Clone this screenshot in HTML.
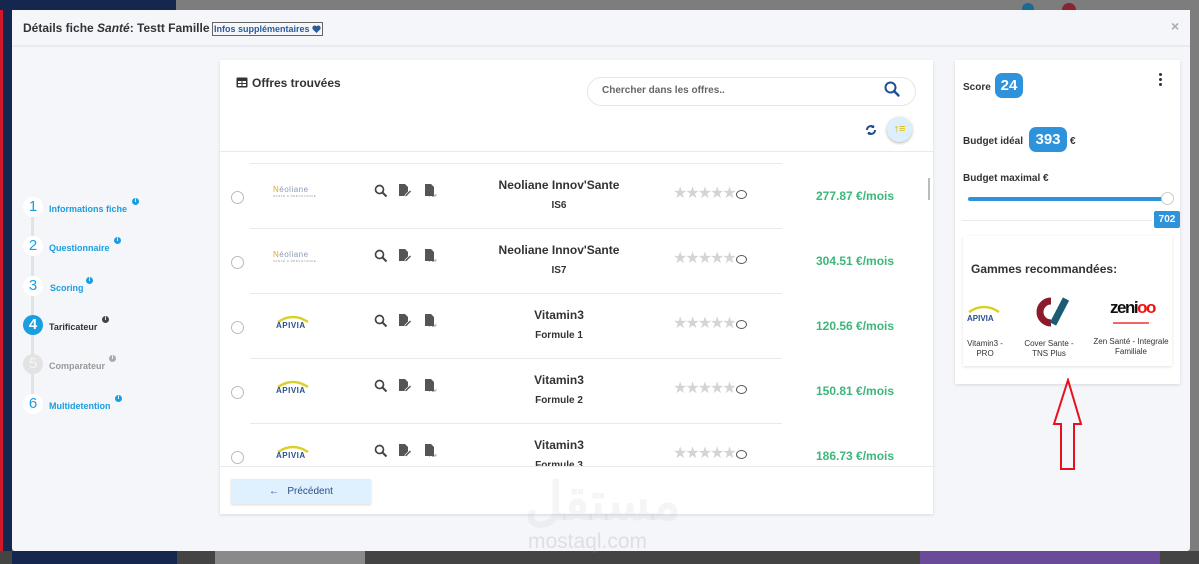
<!DOCTYPE html>
<html><head><meta charset="utf-8"><style>
*{box-sizing:border-box;margin:0;padding:0}
body{width:1199px;height:564px;overflow:hidden;position:relative;background:#7d7d7d;font-family:"Liberation Sans",Arial,sans-serif;color:#333}
.a{position:absolute}
.b{font-weight:bold}
.modal{left:12px;top:10px;width:1178px;height:541px;background:#f5f6fa;border-radius:3px}
.card{background:#fff;box-shadow:0 1px 3px rgba(0,0,0,.12)}
.sep{height:1px;background:#e6e9ee}
.radio{width:13px;height:13px;border:1px solid #bbb;border-radius:50%}
.stars{color:#d4d4d4;font-size:16px;letter-spacing:-2px}
.price{color:#3cb77a;font-weight:bold;font-size:12px}
.step{width:20px;height:20px;border-radius:50%;background:#fff;color:#1a9ee0;font-size:15px;text-align:center;line-height:20px}
.sl{font-size:9px;font-weight:bold;color:#1a9ee0}
.inf{width:7px;height:7px;border-radius:50%;background:#1a9ee0;color:#fff;font-size:6px;line-height:7px;text-align:center;font-weight:bold}
.badge{background:#2f93dc;color:#fff;font-weight:bold;border-radius:7px;text-align:center}
</style></head><body>
<div class="a" style="left:0;top:0;width:12px;height:564px;background:#15274e"></div>
<div class="a" style="left:0;top:0;width:3px;height:564px;background:#d0182a"></div>
<div class="a" style="left:0;top:0;width:176px;height:10px;background:#15274e"></div>
<div class="a" style="left:0;top:551px;width:1199px;height:13px;background:#444"></div>
<div class="a" style="left:12px;top:551px;width:165px;height:13px;background:#15274e"></div>
<div class="a" style="left:215px;top:551px;width:150px;height:13px;background:#8a8a8a"></div>
<div class="a" style="left:920px;top:551px;width:240px;height:13px;background:#6a4b9a"></div>
<div class="a" style="left:1022px;top:3px;width:12px;height:8px;border-radius:6px 6px 0 0;background:#1a6a92"></div>
<div class="a" style="left:1062px;top:3px;width:14px;height:8px;border-radius:7px 7px 0 0;background:#8b2232"></div>

<div class="a modal">
  <div class="a" style="left:0;top:0;width:1178px;height:37px;border-bottom:2px solid #e8ebf0;background:#f4f6fa"></div>
  <div class="a b" style="left:11px;top:11px;font-size:12px;color:#333">Détails fiche <i>Santé</i>: Testt Famille</div>
  <div class="a" style="left:200px;top:12px;width:111px;height:14px;border:1px solid #666;font-size:9px;color:#2b5b9a;font-weight:bold;line-height:12px;padding-left:1px">Infos supplémentaires <svg width="9" height="8" viewBox="0 0 10 9" style="vertical-align:-1px"><path d="M5 9L1 5A2.4 2.4 0 0 1 5 1.5A2.4 2.4 0 0 1 9 5Z" fill="#2b5b9a"/></svg></div>
  <div class="a" style="left:1159px;top:8px;color:#aaa;font-size:14px;font-weight:bold">×</div>
</div>

<!-- stepper -->
<div class="a" style="left:31px;top:208px;width:3px;height:195px;background:#e3e3e3"></div>
<div class="a step" style="left:23px;top:197px">1</div><div class="a sl" style="left:49px;top:204px">Informations fiche</div><div class="a inf" style="left:132px;top:198px">i</div>
<div class="a step" style="left:23px;top:236px">2</div><div class="a sl" style="left:49px;top:243px">Questionnaire</div><div class="a inf" style="left:114px;top:237px">i</div>
<div class="a step" style="left:23px;top:276px">3</div><div class="a sl" style="left:50px;top:283px">Scoring</div><div class="a inf" style="left:86px;top:277px">i</div>
<div class="a step" style="left:23px;top:315px;background:#1a9ee0;color:#fff;font-weight:bold">4</div><div class="a sl" style="left:49px;top:322px;color:#333">Tarificateur</div><div class="a inf" style="left:102px;top:316px;background:#444">i</div>
<div class="a step" style="left:23px;top:354px;background:#e3e3e3;color:#f5f5f5">5</div><div class="a sl" style="left:49px;top:361px;color:#999">Comparateur</div><div class="a inf" style="left:109px;top:355px;background:#aaa">i</div>
<div class="a step" style="left:23px;top:394px">6</div><div class="a sl" style="left:49px;top:401px">Multidetention</div><div class="a inf" style="left:115px;top:395px">i</div>

<!-- main card -->
<div class="a card" style="left:220px;top:60px;width:713px;height:454px"></div>
<svg class="a" style="left:236px;top:77px" width="12" height="11" viewBox="0 0 12 11"><rect x="0.5" y="0.5" width="11" height="10" rx="1" fill="#333"/><path d="M2 4h3.5v2H2zM6.5 4H10v2H6.5zM2 7h3.5v2H2zM6.5 7H10v2H6.5z" fill="#fff"/></svg>
<div class="a b" style="left:252px;top:76px;font-size:12px">Offres trouvées</div>
<div class="a" style="left:587px;top:77px;width:329px;height:29px;border:1px solid #e6e6e6;border-radius:15px"></div>
<div class="a" style="left:602px;top:85px;font-size:10px;color:#666;font-weight:bold">Chercher dans les offres..</div>
<svg class="a" style="left:883px;top:80px" width="18" height="18" viewBox="0 0 18 18"><circle cx="7.5" cy="7.5" r="5" fill="none" stroke="#1f4f93" stroke-width="2"/><path d="M11 11l4.5 4.5" stroke="#1f4f93" stroke-width="2.4" stroke-linecap="round"/></svg>
<svg class="a" style="left:865px;top:124px" width="12" height="12" viewBox="0 0 12 12"><path d="M2 6a4 4 0 0 1 7-2.6M10 6a4 4 0 0 1-7 2.6" stroke="#1f4f93" stroke-width="2" fill="none"/><path d="M9 1v3H6z M3 11V8h3z" fill="#1f4f93"/></svg>
<div class="a" style="left:887px;top:117px;width:25px;height:25px;border-radius:50%;background:#dcefff;box-shadow:0 1px 3px rgba(0,0,0,.3);color:#d9b800;font-size:11px;text-align:center;line-height:25px;font-weight:bold">↑≡</div>
<div class="a sep" style="left:220px;top:151px;width:713px"></div>

<!-- rows -->
<div class="a sep" style="left:250px;top:163px;width:532px"></div>
<div class="a sep" style="left:250px;top:228px;width:532px"></div>
<div class="a sep" style="left:250px;top:293px;width:532px"></div>
<div class="a sep" style="left:250px;top:358px;width:532px"></div>
<div class="a sep" style="left:250px;top:423px;width:532px"></div>
<div class="a" style="left:928px;top:178px;width:2px;height:22px;background:#bbb"></div>

<div id="rows"></div>
<script>
var rows=[["neo","Neoliane Innov'Sante","IS6","277.87"],["neo","Neoliane Innov'Sante","IS7","304.51"],["ap","Vitamin3","Formule 1","120.56"],["ap","Vitamin3","Formule 2","150.81"],["ap","Vitamin3","Formule 3","186.73"]];
var h="";
rows.forEach(function(r,i){var y=163+65*i;
h+='<div class="a radio" style="left:231px;top:'+(y+28)+'px"></div>';
if(r[0]=="neo")h+='<div class="a" style="left:273px;top:'+(y+22)+'px;font-size:8px;color:#8a9bb5;letter-spacing:.5px"><span style="color:#e0a820">N</span>éoliane<div style="font-size:3px;color:#999">SANTÉ &amp; PRÉVOYANCE</div></div>';
else h+='<svg class="a" style="left:275px;top:'+(y+20)+'px" width="36" height="10"><path d="M3 9Q18 -1 33 9" stroke="#d7d12a" stroke-width="2.5" fill="none"/></svg><div class="a b" style="left:276px;top:'+(y+28)+'px;font-size:8px;color:#2a4f8f;letter-spacing:.5px">APIVIA</div>';
h+='<svg class="a" style="left:374px;top:'+(y+21)+'px" width="14" height="14"><circle cx="5.5" cy="5.5" r="4" fill="none" stroke="#444" stroke-width="1.7"/><path d="M8.5 8.5l4 4" stroke="#444" stroke-width="2"/></svg>';
h+='<svg class="a" style="left:398px;top:'+(y+20)+'px" width="14" height="15"><path d="M1 1h6l3 3v9H1z" fill="#555"/><path d="M7 12l5-5 1.5 1.5-5 5H7z" fill="#555" stroke="#fff" stroke-width=".7"/></svg>';
h+='<svg class="a" style="left:424px;top:'+(y+20)+'px" width="14" height="15"><path d="M1 1h6l3 3v9H1z" fill="#555"/><text x="5" y="14" font-size="4" fill="#555" font-family="Liberation Sans">PDF</text></svg>';
h+='<div class="a b" style="left:469px;width:180px;text-align:center;top:'+(y+15)+'px;font-size:12px;color:#333">'+r[1]+'</div>';
h+='<div class="a b" style="left:469px;width:180px;text-align:center;top:'+(y+37)+'px;font-size:10px;color:#333">'+r[2]+'</div>';
h+='<div class="a stars" style="left:673px;top:'+(y+20)+'px">★★★★★</div><div class="a" style="left:736px;top:'+(y+27)+'px;width:11px;height:9px;border:1.5px solid #555;border-radius:50%"></div>';
h+='<div class="a price" style="left:816px;top:'+(y+26)+'px">'+r[3]+' €/mois</div>';});
document.getElementById("rows").innerHTML=h;
</script>
<div class="a" style="left:220px;top:466px;width:713px;height:48px;background:#fff;border-top:1px solid #e6e9ee"></div>
<div class="a" style="left:231px;top:479px;width:140px;height:25px;background:#dff0fe;box-shadow:0 1px 2px rgba(0,0,0,.15);font-size:10px;color:#2b4f8a;text-align:center;line-height:25px">←&nbsp;&nbsp;&nbsp;Précédent</div>
<div class="a b" style="left:525px;top:480px;width:150px;text-align:center;font-size:52px;color:rgba(170,170,170,.12);line-height:45px">مستقل</div>
<div class="a" style="left:528px;top:530px;font-size:21px;color:rgba(170,170,170,.3)">mostaql.com</div>

<!-- right panel -->
<div class="a card" style="left:955px;top:60px;width:225px;height:324px"></div>
<div class="a b" style="left:963px;top:82px;font-size:10px">Score</div>
<div class="a badge" style="left:995px;top:73px;width:28px;height:25px;font-size:15px;line-height:25px">24</div>
<div class="a" style="left:1159px;top:73px;width:3px;height:3px;background:#333;border-radius:50%;box-shadow:0 5px 0 #333,0 10px 0 #333"></div>
<div class="a b" style="left:963px;top:136px;font-size:10px">Budget idéal</div>
<div class="a badge" style="left:1029px;top:127px;width:38px;height:25px;font-size:15px;line-height:25px">393</div>
<div class="a b" style="left:1070px;top:136px;font-size:10px">€</div>
<div class="a b" style="left:963px;top:173px;font-size:10px">Budget maximal €</div>
<div class="a" style="left:968px;top:197px;width:200px;height:4px;border-radius:2px;background:#2f93dc"></div>
<div class="a" style="left:1161px;top:192px;width:13px;height:13px;border-radius:50%;background:#fff;border:1px solid #ccc"></div>
<div class="a badge" style="left:1154px;top:211px;width:26px;height:17px;font-size:10px;line-height:17px;border-radius:2px">702</div>
<div class="a sep" style="left:962px;top:220px;width:190px"></div>
<div class="a card" style="left:963px;top:236px;width:209px;height:130px"></div>
<div class="a b" style="left:971px;top:262px;font-size:12px;color:#333">Gammes recommandées:</div>
<svg class="a" style="left:966px;top:303px" width="36" height="10"><path d="M3 9Q18 -1 33 9" stroke="#d7d12a" stroke-width="2.5" fill="none"/></svg>
<div class="a b" style="left:967px;top:314px;font-size:8px;color:#2a4f8f">APIVIA</div>
<svg class="a" style="left:1030px;top:296px" width="40" height="34"><path d="M21 5A11 11 0 1 0 21 27" stroke="#8b1a2a" stroke-width="7" fill="none"/><path d="M23 28L36 3" stroke="#1a5c73" stroke-width="7"/></svg>
<div class="a b" style="left:1110px;top:298px;font-size:17px;color:#111;letter-spacing:-1.5px">zeni<span style="color:#e11">oo</span></div>
<div class="a" style="left:1113px;top:322px;width:36px;height:2px;background:#e66"></div>
<div class="a" style="left:963px;top:339px;width:44px;text-align:center;font-size:8px;color:#333;line-height:10px">Vitamin3 - PRO</div>
<div class="a" style="left:1016px;top:339px;width:66px;text-align:center;font-size:8px;color:#333;line-height:10px">Cover Sante - TNS Plus</div>
<div class="a" style="left:1090px;top:337px;width:82px;text-align:center;font-size:8px;color:#333;line-height:10px">Zen Santé - Integrale Familiale</div>

<svg class="a" style="left:1050px;top:378px" width="36" height="94"><path d="M18 2L31 46H24V91H11V46H4Z" fill="none" stroke="#e8101e" stroke-width="2"/></svg>
</body></html>
